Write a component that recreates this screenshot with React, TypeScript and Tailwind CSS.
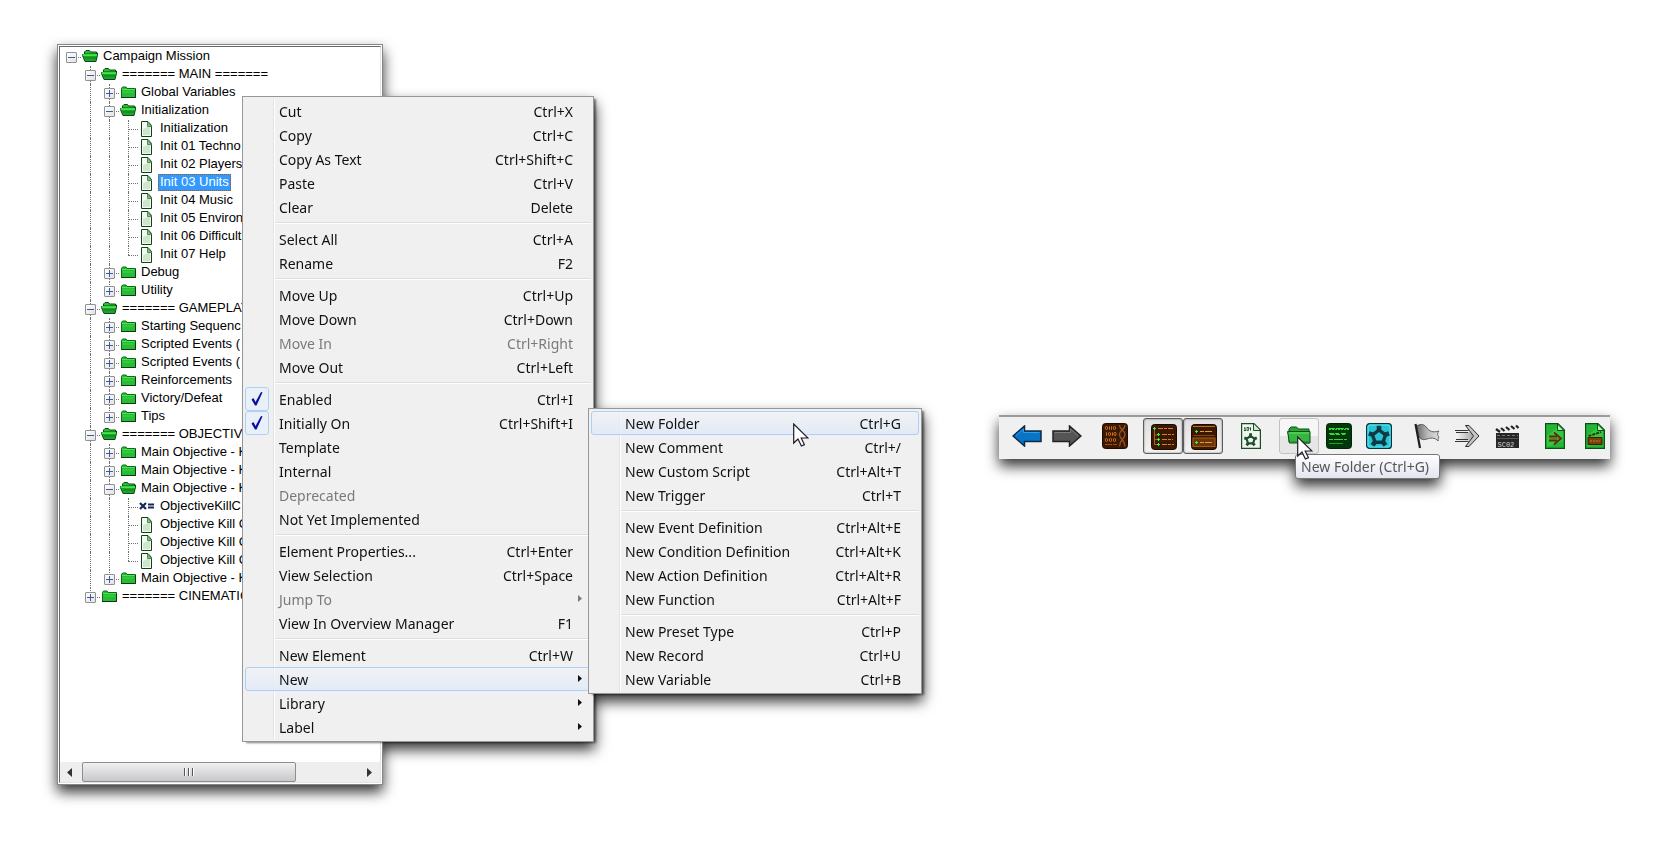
import React from "react";

type NodeKind = "folder" | "trigger" | "variable";

interface TreeNode {
  label: string;
  kind?: NodeKind;
  open?: boolean;
  selected?: boolean;
  children?: TreeNode[];
}

const folder = (label: string): TreeNode => ({ label });
const trigger = (label: string, selected = false): TreeNode => ({ label, kind: "trigger", selected });

const tree: TreeNode = {
  label: "Campaign Mission",
  open: true,
  children: [
    {
      label: "======= MAIN =======",
      open: true,
      children: [
        folder("Global Variables"),
        {
          label: "Initialization",
          open: true,
          children: [
            trigger("Initialization"),
            trigger("Init 01 Techno"),
            trigger("Init 02 Players"),
            trigger("Init 03 Units", true),
            trigger("Init 04 Music"),
            trigger("Init 05 Environ"),
            trigger("Init 06 Difficulti"),
            trigger("Init 07 Help"),
          ],
        },
        folder("Debug"),
        folder("Utility"),
      ],
    },
    {
      label: "======= GAMEPLAY",
      open: true,
      children: [
        folder("Starting Sequenc"),
        folder("Scripted Events ("),
        folder("Scripted Events ("),
        folder("Reinforcements"),
        folder("Victory/Defeat"),
        folder("Tips"),
      ],
    },
    {
      label: "======= OBJECTIVE",
      open: true,
      children: [
        folder("Main Objective - K"),
        folder("Main Objective - K"),
        {
          label: "Main Objective - K",
          open: true,
          children: [
            { label: "ObjectiveKillC", kind: "variable" },
            trigger("Objective Kill C"),
            trigger("Objective Kill C"),
            trigger("Objective Kill C"),
          ],
        },
        folder("Main Objective - K"),
      ],
    },
    folder("======= CINEMATIC"),
  ],
};

function FolderIcon({ open }: { open?: boolean }) {
  return open ? (
    <svg className="h-4 w-4 flex-none" viewBox="0 0 16 16" aria-hidden="true">
      <path d="M2.500 5V3L4 1.500h3.500l1 1.500h6v2z" fill="#27c233" stroke="#0b4a12" />
      <path d="M0 5.500h13.500L15.500 4v2l-1.500 6.500H3z" fill="#1fa42b" stroke="#0b4a12" />
      <path d="M.5 6H15" stroke="#4dff55" strokeWidth="1.500" />
      <path d="M3 9h11" stroke="#117a1e" />
    </svg>
  ) : (
    <svg className="h-4 w-4 flex-none" viewBox="0 0 16 16" aria-hidden="true">
      <path d="M1.500 12.500v-9L2.500 2H6l1 1.500h8.500v9z" fill="#29ba37" stroke="#0e6a1a" />
      <path d="M2 4.500h13" stroke="#45e850" />
      <path d="M2.500 7h11" stroke="#35dc44" />
      <path d="M1 12.500h14.500V4" stroke="#073b0d" fill="none" />
    </svg>
  );
}

function NodeIcon({ node }: { node: TreeNode }) {
  if (node.kind === "trigger") {
    return (
      <svg className="h-4 w-4 flex-none" viewBox="0 0 16 16" aria-hidden="true">
        <path d="M2.500.5h6.500l3.500 4v11h-10z" fill="#f3f9f2" stroke="#12401a" />
        <path d="M4 14V8l7-3v9z" fill="#cfe6cd" />
        <path d="M8.500 1v4.500h4z" fill="#8dc08c" stroke="#4d8f52" />
      </svg>
    );
  }
  if (node.kind === "variable") {
    return (
      <svg className="h-4 w-4 flex-none" viewBox="0 0 16 16" aria-hidden="true">
        <path d="M1 4l6 6M7 4l-6 6" stroke="#14285c" strokeWidth="2.200" fill="none" />
        <path d="M9 5.500h6M9 8.500h6" stroke="#14285c" strokeWidth="2" />
      </svg>
    );
  }
  return <FolderIcon open={node.open} />;
}

function Expander({ open, label }: { open?: boolean; label: string }) {
  return (
    <button
      type="button"
      aria-label={(open ? "Collapse " : "Expand ") + label}
      className="relative z-10 flex h-[11px] w-[11px] items-center justify-center rounded-[1px] border border-[#919191] bg-linear-to-br from-white to-[#e2e2e2]"
    >
      <svg viewBox="0 0 9 9" className="h-[9px] w-[9px]" shapeRendering="crispEdges" aria-hidden="true">
        <path d={open ? "M1 4h7v1H1z" : "M1 4h7v1H1zM4 1h1v7H4z"} fill="#3c5aa0" />
      </svg>
    </button>
  );
}

function TreeItem({ node, trail, last }: { node: TreeNode; trail: boolean[]; last: boolean }) {
  const depth = trail.length;
  const isFolder = !node.kind;
  return (
    <li role="treeitem" aria-selected={!!node.selected} aria-expanded={isFolder ? !!node.open : undefined}>
      <div className="flex h-[18px] items-center">
        {trail.map((continues, i) => (
          <span key={i} className="flex h-full w-[19px] flex-none pl-[9px]">
            {continues && <span className="border-l border-dotted border-[#707070]" />}
          </span>
        ))}
        <span className="relative mr-px flex h-full w-[19px] flex-none items-center justify-center">
          {depth > 0 && (
            <span
              className={
                "absolute top-0 left-[9px] border-l border-dotted border-[#707070] " + (last ? "h-[9px]" : "h-full")
              }
            />
          )}
          <span className="absolute top-[9px] right-0 left-[9px] border-t border-dotted border-[#707070]" />
          {isFolder && <Expander open={node.open} label={node.label} />}
        </span>
        <NodeIcon node={node} />
        <span
          className={
            "ml-[3px] h-[17px] self-start whitespace-pre px-0.5 leading-4 " +
            (node.selected ? "bg-[#3399ff] text-white outline-1 -outline-offset-1 outline-dotted outline-[#a05a10]" : "")
          }
        >
          {node.label}
        </span>
      </div>
      {node.children && node.open && (
        <ul role="group">
          {node.children.map((child, i) => (
            <TreeItem
              key={i}
              node={child}
              trail={[...trail, depth > 0 && !last]}
              last={i === node.children!.length - 1}
            />
          ))}
        </ul>
      )}
    </li>
  );
}

function TreePanel() {
  return (
    <section
      aria-label="Triggers"
      className="flex h-[741px] w-[326px] flex-col border border-[#83868c] bg-white p-px font-['Liberation_Sans',Arial,sans-serif] text-[13px] text-black"
    >
      <div className="flex min-h-0 flex-1 flex-col border border-t-[#696969] border-r-[#e3e3e3] border-b-[#e3e3e3] border-l-[#696969]">
        <ul role="tree" className="min-h-0 flex-1 overflow-hidden pt-px pl-0.5">
          <TreeItem node={tree} trail={[]} last />
        </ul>
        <div className="flex h-5 flex-none items-stretch bg-[#eeeeee]">
          <button type="button" aria-label="Scroll left" className="flex w-[22px] items-center justify-center pr-1">
            <svg viewBox="0 0 5 9" className="h-[9px] w-[5px]" aria-hidden="true">
              <path d="M5 0v9L0 4.500z" fill="#333" />
            </svg>
          </button>
          <div className="flex-1">
            <div className="flex h-full w-[76%] items-center justify-center gap-0.5 rounded-[2px] border border-[#8e8e8e] bg-linear-to-b from-[#f0f0f0] via-[#dcdcde] to-[#c8c8cc]">
              <span className="h-2 w-0.5 border-r border-white bg-[#555]" />
              <span className="h-2 w-0.5 border-r border-white bg-[#555]" />
              <span className="h-2 w-0.5 border-r border-white bg-[#555]" />
            </div>
          </div>
          <button type="button" aria-label="Scroll right" className="flex w-[17px] items-center pl-1">
            <svg viewBox="0 0 5 9" className="h-[9px] w-[5px]" aria-hidden="true">
              <path d="M0 0v9l5-4.500z" fill="#333" />
            </svg>
          </button>
        </div>
      </div>
    </section>
  );
}

interface MenuEntry {
  label: string;
  keys?: string;
  disabled?: boolean;
  checked?: boolean;
  submenu?: boolean;
  active?: boolean;
}

const contextMenu: MenuEntry[][] = [
  [
    { label: "Cut", keys: "Ctrl+X" },
    { label: "Copy", keys: "Ctrl+C" },
    { label: "Copy As Text", keys: "Ctrl+Shift+C" },
    { label: "Paste", keys: "Ctrl+V" },
    { label: "Clear", keys: "Delete" },
  ],
  [
    { label: "Select All", keys: "Ctrl+A" },
    { label: "Rename", keys: "F2" },
  ],
  [
    { label: "Move Up", keys: "Ctrl+Up" },
    { label: "Move Down", keys: "Ctrl+Down" },
    { label: "Move In", keys: "Ctrl+Right", disabled: true },
    { label: "Move Out", keys: "Ctrl+Left" },
  ],
  [
    { label: "Enabled", keys: "Ctrl+I", checked: true },
    { label: "Initially On", keys: "Ctrl+Shift+I", checked: true },
    { label: "Template" },
    { label: "Internal" },
    { label: "Deprecated", disabled: true },
    { label: "Not Yet Implemented" },
  ],
  [
    { label: "Element Properties...", keys: "Ctrl+Enter" },
    { label: "View Selection", keys: "Ctrl+Space" },
    { label: "Jump To", submenu: true, disabled: true },
    { label: "View In Overview Manager", keys: "F1" },
  ],
  [
    { label: "New Element", keys: "Ctrl+W" },
    { label: "New", submenu: true, active: true },
    { label: "Library", submenu: true },
    { label: "Label", submenu: true },
  ],
];

const newMenu: MenuEntry[][] = [
  [
    { label: "New Folder", keys: "Ctrl+G", active: true },
    { label: "New Comment", keys: "Ctrl+/" },
    { label: "New Custom Script", keys: "Ctrl+Alt+T" },
    { label: "New Trigger", keys: "Ctrl+T" },
  ],
  [
    { label: "New Event Definition", keys: "Ctrl+Alt+E" },
    { label: "New Condition Definition", keys: "Ctrl+Alt+K" },
    { label: "New Action Definition", keys: "Ctrl+Alt+R" },
    { label: "New Function", keys: "Ctrl+Alt+F" },
  ],
  [
    { label: "New Preset Type", keys: "Ctrl+P" },
    { label: "New Record", keys: "Ctrl+U" },
    { label: "New Variable", keys: "Ctrl+B" },
  ],
];

function MenuItem({ entry }: { entry: MenuEntry }) {
  return (
    <button
      type="button"
      role={entry.checked ? "menuitemcheckbox" : "menuitem"}
      aria-checked={entry.checked}
      disabled={entry.disabled}
      className={
        "flex h-6 w-full items-center rounded-[3px] border text-left disabled:text-[#7a7a7a] " +
        (entry.active
          ? "border-[#aecff7] bg-linear-to-b from-[#f1f3f6]/60 to-[#dfe9f8]/80"
          : "border-transparent")
      }
    >
      <span className="-ml-px flex w-[34px] flex-none">
        {entry.checked && (
          <span className="flex h-6 w-6 items-center justify-center rounded-[3px] border border-[#aecff7] bg-[#e9f0f8]">
            <svg viewBox="0 0 14 16" className="h-4 w-[14px]" aria-hidden="true">
              <path d="M1.500 8.500L3.500 7l2 4L11 1l1.500.5L6.500 14.500H5z" fill="#0d11a0" />
            </svg>
          </span>
        )}
      </span>
      <span className="flex-1 whitespace-nowrap">{entry.label}</span>
      {entry.keys && <span className="mr-[17px] whitespace-nowrap">{entry.keys}</span>}
      {entry.submenu && (
        <svg viewBox="0 0 4 7" className="mr-2 mb-0.5 h-[7px] w-1" aria-hidden="true">
          <path d="M0 0v7l4-3.500z" fill="currentColor" />
        </svg>
      )}
    </button>
  );
}

function Menu({ groups, label, place }: { groups: MenuEntry[][]; label: string; place: string }) {
  return (
    <div
      role="menu"
      aria-label={label}
      className={
        "absolute border border-[#979797] bg-[#f0f0f0] p-0.5 font-['Noto_Sans','Segoe_UI',sans-serif] text-[14px] text-[#111] shadow-[3px_2px_2px_-1px_rgba(0,0,0,0.5)] " +
        place
      }
    >
      <span className="absolute top-0.5 bottom-0.5 left-[30px] w-0.5 border-l border-[#e2e3e3] bg-white" />
      <div className="relative">
        {groups.map((group, i) => (
          <React.Fragment key={i}>
            {i > 0 && (
              <div role="separator" className="ml-[30px] flex h-2 items-center">
                <span className="h-0.5 w-full border-t border-[#dcdcdc] bg-white" />
              </div>
            )}
            {group.map((entry) => (
              <MenuItem key={entry.label} entry={entry} />
            ))}
          </React.Fragment>
        ))}
      </div>
    </div>
  );
}

function Cursor({ place }: { place: string }) {
  return (
    <svg viewBox="0 0 16 24" className={"pointer-events-none absolute h-6 w-4 " + place} aria-hidden="true">
      <path d="M.7 1v19l4.300-4 3.400 7 3-1.400-3.200-6.600H15z" fill="#fff" stroke="#1c1c28" strokeWidth="1.200" />
    </svg>
  );
}

const icon = "h-[26px] w-[26px]";

const BackIcon = (
  <svg viewBox="0 0 30 22" className="h-[22px] w-[30px]" aria-hidden="true">
    <path d="M1 11L12.500 1v5H29v10.500H12.500v4.500z" fill="#0a74c4" stroke="#0b2a49" strokeWidth="1.500" />
    <path d="M4 10.500L11.500 4v3.500H27.500" fill="none" stroke="#2f9cf0" />
  </svg>
);
const ForwardIcon = (
  <svg viewBox="0 0 30 22" className="h-[22px] w-[30px]" aria-hidden="true">
    <path d="M29 11L17.500 1v5H1v10.500h16.500v4.500z" fill="#555" stroke="#222" strokeWidth="1.500" />
    <path d="M2.500 7.500H18.500V4L26 10.500" fill="none" stroke="#7c7c7c" />
  </svg>
);
const DataIcon = (
  <svg viewBox="0 0 26 26" className={icon} aria-hidden="true">
    <rect x=".5" y=".5" width="25" height="25" rx="3" fill="#3a1803" stroke="#1e0b00" />
    <g fill="none" stroke="#c96c18">
      <ellipse cx="4.500" cy="5" rx="1.200" ry="1.600" />
      <path d="M7.500 3.300v3.500M9.500 3.300v3.500M4.500 9.300v3.500M10.500 9.300v3.500" />
      <ellipse cx="12.500" cy="5" rx="1.200" ry="1.600" />
      <ellipse cx="7.500" cy="11" rx="1.200" ry="1.600" />
      <ellipse cx="13" cy="11" rx="1.200" ry="1.600" />
      <ellipse cx="4.500" cy="17" rx="1.200" ry="1.600" />
      <ellipse cx="8.500" cy="17" rx="1.200" ry="1.600" />
      <ellipse cx="12.500" cy="17" rx="1.200" ry="1.600" />
      <path d="M3 21.500h12" stroke="#a0500f" strokeDasharray="7 1" />
    </g>
    <g fill="none" stroke="#9a5620" strokeWidth="1.300">
      <path d="M17.500 2c0 5 5.500 5 5.500 9.500s-5.500 5-5.500 12M23 2c0 5-5.500 5-5.500 9.500s5.500 5 5.500 12" />
    </g>
  </svg>
);
const TreeViewIcon = (
  <svg viewBox="0 0 26 26" className={icon} aria-hidden="true">
    <rect x=".5" y=".5" width="25" height="25" rx="3" fill="#3a1803" stroke="#1e0b00" />
    <path d="M3.500 6v15M3.500 11h3M3.500 15.500h3M3.500 20.500h3" fill="none" stroke="#a85d18" />
    <g stroke="#d9821e" strokeDasharray="5 1 3 1">
      <path d="M7 4.500h16M11 10.500h12M11 15.500h11M11 20.500h12" />
    </g>
    <path
      d="M2 4.500h3M3.500 3v3M6 10.500h3M7.500 9v3M6 15.500h3M7.500 14v3M6 20.500h3M7.500 19v3"
      stroke="#2bff3c"
    />
  </svg>
);
const ListViewIcon = (
  <svg viewBox="0 0 26 26" className={icon} aria-hidden="true">
    <rect x=".5" y=".5" width="25" height="25" rx="3" fill="#3a1803" stroke="#1e0b00" />
    <path d="M2 2.500h22" stroke="#b9701c" />
    <rect x="2" y="14" width="22" height="8.500" fill="#6b350b" stroke="#a35b17" />
    <path d="M2.500 11.500h21" stroke="#854311" />
    <path d="M9 7.500h13M9 18.500h13" stroke="#f09a2c" strokeDasharray="4 1 7 1" />
    <path d="M4 7.500h3M5.500 6v3M4 18.500h3M5.500 17v3" stroke="#2bff3c" />
  </svg>
);

function GearShape({ color }: { color: string }) {
  return (
    <g fill="none" stroke={color}>
      <path d="M13 7l6.500 4.800-2.500 7.400H9l-2.500-7.400z" strokeWidth="3.400" strokeLinejoin="round" />
      <path
        d="M13 7V2.800M19.500 11.600l3.600-1.300M17 19l2.500 3.300M9 19l-2.500 3.300M6.500 11.600l-3.600-1.300"
        strokeWidth="4.600"
      />
    </g>
  );
}

const ScriptDocIcon = (
  <svg viewBox="0 0 20 26" className="h-[26px] w-5" aria-hidden="true">
    <path d="M.6.6H13l6.400 6.400v18.400H.6z" fill="#eef7ee" stroke="#1d4a27" strokeWidth="1.200" />
    <path d="M12.500 1v6.500H19" fill="#d3e8d3" stroke="#1d4a27" />
    <path d="M4 4.500v3M9.500 4.500v3M3 7.500h2M3 5h1M8.500 5h1" stroke="#1d4a27" fill="none" />
    <rect x="6" y="4.500" width="1.500" height="3" fill="none" stroke="#1d4a27" strokeWidth=".8" />
    <g transform="translate(1.500 8.500) scale(.62)">
      <GearShape color="#1f4f2c" />
    </g>
  </svg>
);
const NewFolderIcon = (
  <svg viewBox="0 0 26 22" className="h-[22px] w-[26px]" aria-hidden="true">
    <path d="M3 17V4l2-2h5.500l2 2H23v14z" fill="#2aa534" stroke="#0d4c16" />
    <path d="M1.500 6.500h22.500V18H3.500z" fill="#37b541" stroke="#0d4c16" />
    <path d="M3 8h20" stroke="#67dd6d" />
    <path d="M5 17h18.500V8" stroke="#1c7f27" fill="none" />
  </svg>
);
const ScriptIcon = (
  <svg viewBox="0 0 26 26" className={icon} aria-hidden="true">
    <rect x=".5" y=".5" width="25" height="25" rx="3" fill="#02380c" stroke="#012306" />
    <g stroke="#35d83c">
      <path d="M3 5.500h20" strokeDasharray="6 1 8 1" />
      <path d="M3 6.500h20" strokeDasharray="2 1" />
      <path d="M3 10.500h17M4 11.500h15" strokeDasharray="5 1 4 2" />
      <path d="M3 16.500h18" strokeDasharray="4 1 9 1" />
      <path d="M3 20.500h14" stroke="#1fa328" />
    </g>
  </svg>
);
const GearIcon = (
  <svg viewBox="0 0 26 26" className={icon} aria-hidden="true">
    <rect x=".6" y=".6" width="24.800" height="24.800" rx="3" fill="#2bc4d4" stroke="#06323c" strokeWidth="1.200" />
    <rect x="2" y="2" width="22" height="22" rx="2" fill="none" stroke="#5de7f3" />
    <GearShape color="#0e3a44" />
  </svg>
);
const FlagIcon = (
  <svg viewBox="0 0 26 26" className={icon} aria-hidden="true">
    <defs>
      <linearGradient id="flag" x1="0" y1="0" x2="1" y2="0">
        <stop offset="0" stopColor="#666" />
        <stop offset=".5" stopColor="#bbb" />
        <stop offset="1" stopColor="#ddd" />
      </linearGradient>
    </defs>
    <path
      d="M2.500 3C8 0 11 2 13 5s6 5 12 3c-1.500 2-2 4 0 6-2 3 0 3-1 4-3-4-8-3-11-2s-6 1-8-2z"
      fill="url(#flag)"
      stroke="#444"
      strokeWidth=".8"
    />
    <path d="M1.500 1L6 25" stroke="#1e1e1e" strokeWidth="2.200" />
  </svg>
);
const ArrowsIcon = (
  <svg viewBox="0 0 26 26" className={icon} aria-hidden="true">
    <defs>
      <linearGradient id="shaft" x1="0" y1="0" x2="1" y2="0">
        <stop offset="0" stopColor="#f4f4f4" />
        <stop offset="1" stopColor="#a8a8a8" />
      </linearGradient>
    </defs>
    <path d="M2 9h14l3 4-3 4.500H2L5 13z" fill="url(#shaft)" />
    <path d="M1 7.500h13.500M1 18.500h13.500M2 9.500h12M2 16.500h12" stroke="#333" />
    <path d="M11.500 2.500H15L25 13 15 23.500h-3.500L19.500 13z" fill="#c4c4c4" stroke="#2a2a2a" strokeLinejoin="round" />
  </svg>
);
const ClapperIcon = (
  <svg viewBox="0 0 26 26" className={icon} aria-hidden="true">
    <path d="M1 6L24 2v3.500L2 10z" fill="#eee" />
    <path d="M2 6l4 3M7 5l3.500 3M12 4l3.500 3M17 3l3.500 3M22 2.500L24.500 5" stroke="#222" strokeWidth="2.200" />
    <path d="M2 10h23v15H2z" fill="#262626" />
    <path d="M3 12.500h21" stroke="#777" strokeDasharray="3 2" />
    <path d="M3 15.500h21" stroke="#555" />
    <text x="3.500" y="23.500" fontSize="7" fontFamily="Liberation Mono, monospace" fill="#d4d4d4">
      SC02
    </text>
  </svg>
);
const greenPage = (
  <>
    <path d="M.6.6H13l6.400 6.400v18.400H.6z" fill="#25b534" stroke="#075212" strokeWidth="1.200" />
    <path d="M2 13L13 4l5 4v10L2 24z" fill="#3fd04b" opacity=".6" />
    <path d="M12.500 1v6.500H19z" fill="#b5f7b4" stroke="#075212" />
  </>
);
const PageArrowIcon = (
  <svg viewBox="0 0 20 26" className="h-[26px] w-5" aria-hidden="true">
    {greenPage}
    <path d="M4 13.500h8M4 17.500h8M9 9.500l7 6-7 6" fill="none" stroke="#5a2e08" strokeWidth="1.800" />
    <path d="M5 15.500h9" stroke="#8a6a1c" />
  </svg>
);
const PageClapperIcon = (
  <svg viewBox="0 0 20 26" className="h-[26px] w-5" aria-hidden="true">
    {greenPage}
    <path d="M3 14.500h14v7H3z" fill="#7a3f0a" stroke="#3a1d03" />
    <path d="M3.500 13L16 9" stroke="#2a2a08" strokeWidth="1.800" strokeDasharray="3 1" />
    <path d="M5 18h10" stroke="#a4601a" strokeWidth="2" strokeDasharray="2 1" />
  </svg>
);

interface Tool {
  label: string;
  icon: React.ReactNode;
  state?: "pressed" | "hover";
}

const toolGroups: Tool[][] = [
  [
    { label: "Back", icon: BackIcon },
    { label: "Forward", icon: ForwardIcon },
  ],
  [{ label: "View Raw Data", icon: DataIcon }],
  [
    { label: "Tree View", icon: TreeViewIcon, state: "pressed" },
    { label: "List View", icon: ListViewIcon, state: "pressed" },
  ],
  [{ label: "View Script", icon: ScriptDocIcon }],
  [
    { label: "New Folder", icon: NewFolderIcon, state: "hover" },
    { label: "New Custom Script", icon: ScriptIcon },
    { label: "New Trigger", icon: GearIcon },
  ],
  [
    { label: "New Event", icon: FlagIcon },
    { label: "New Action", icon: ArrowsIcon },
    { label: "New Cinematic", icon: ClapperIcon },
  ],
  [
    { label: "New Action Definition", icon: PageArrowIcon },
    { label: "New Function", icon: PageClapperIcon },
  ],
];

const toolState = {
  pressed:
    "border border-[#5c5c5c] bg-linear-to-b from-[#e0e0e0] to-[#f2f2f2] pt-0.5 pl-0.5 shadow-[inset_0_0_2px_rgba(0,0,0,0.5)]",
  hover: "border border-[#c3c3c3] bg-linear-to-b from-[#f6f6f6] from-50% to-[#e6e6e6] to-50%",
  idle: "border border-transparent",
};

function Toolbar() {
  return (
    <div className="relative w-[611px] flex-none drop-shadow-[0_7px_7px_rgba(0,0,0,0.8)]">
      <div
        role="toolbar"
        aria-label="Trigger tools"
        className="h-11 border-t-2 border-[#9b9b9b] bg-[#f0f0f0]"
      >
        <div className="flex gap-2 overflow-hidden pt-px pl-2">
          {toolGroups.map((group, i) => (
            <div key={i} className="flex flex-none">
              {group.map((tool) => (
                <button
                  key={tool.label}
                  type="button"
                  aria-label={tool.label}
                  aria-pressed={tool.state === "pressed" ? true : undefined}
                  className={
                    "flex h-9 w-10 flex-none items-center justify-center rounded-[3px] " +
                    toolState[tool.state ?? "idle"]
                  }
                >
                  {tool.icon}
                </button>
              ))}
            </div>
          ))}
        </div>
      </div>
      <div
        role="tooltip"
        className="absolute top-[39px] left-[296px] flex h-[25px] w-[145px] items-center rounded-[3px] border border-[#767676] bg-linear-to-b from-white to-[#e4e5f0] pl-[5px] font-['Noto_Sans','Segoe_UI',sans-serif] text-[14px] whitespace-nowrap text-[#575757]"
      >
        New Folder (Ctrl+G)
      </div>
      <Cursor place="top-[21px] left-[298px]" />
    </div>
  );
}

export default function App() {
  return (
    <main className="flex min-h-screen items-start justify-between overflow-hidden bg-white pt-11 pr-14 pb-14 pl-[57px]">
      <div className="relative flex-none drop-shadow-[0_7px_7px_rgba(0,0,0,0.8)]">
        <TreePanel />
        <Menu label="Edit" groups={contextMenu} place="top-[52px] left-[185px] w-[352px]" />
        <Menu label="New" groups={newMenu} place="top-[364px] left-[531px] w-[334px]" />
        <Cursor place="top-[379px] left-[736px]" />
      </div>
      <div className="flex-none pt-[371px]">
        <Toolbar />
      </div>
    </main>
  );
}
